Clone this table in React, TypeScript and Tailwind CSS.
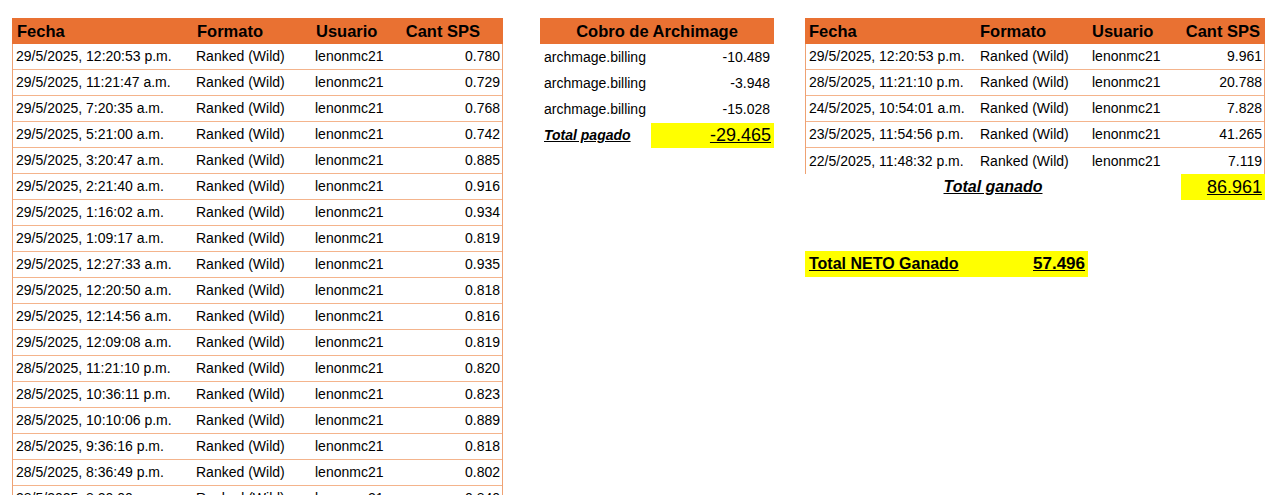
import React from "react";

const leftRows: [string, string][] = [
  ["29/5/2025, 12:20:53 p.m.", "0.780"],
  ["29/5/2025, 11:21:47 a.m.", "0.729"],
  ["29/5/2025, 7:20:35 a.m.", "0.768"],
  ["29/5/2025, 5:21:00 a.m.", "0.742"],
  ["29/5/2025, 3:20:47 a.m.", "0.885"],
  ["29/5/2025, 2:21:40 a.m.", "0.916"],
  ["29/5/2025, 1:16:02 a.m.", "0.934"],
  ["29/5/2025, 1:09:17 a.m.", "0.819"],
  ["29/5/2025, 12:27:33 a.m.", "0.935"],
  ["29/5/2025, 12:20:50 a.m.", "0.818"],
  ["29/5/2025, 12:14:56 a.m.", "0.816"],
  ["29/5/2025, 12:09:08 a.m.", "0.819"],
  ["28/5/2025, 11:21:10 p.m.", "0.820"],
  ["28/5/2025, 10:36:11 p.m.", "0.823"],
  ["28/5/2025, 10:10:06 p.m.", "0.889"],
  ["28/5/2025, 9:36:16 p.m.", "0.818"],
  ["28/5/2025, 8:36:49 p.m.", "0.802"],
  ["28/5/2025, 8:20:00 p.m.", "0.840"],
];

const rightRows: [string, string][] = [
  ["29/5/2025, 12:20:53 p.m.", "9.961"],
  ["28/5/2025, 11:21:10 p.m.", "20.788"],
  ["24/5/2025, 10:54:01 a.m.", "7.828"],
  ["23/5/2025, 11:54:56 p.m.", "41.265"],
  ["22/5/2025, 11:48:32 p.m.", "7.119"],
];

const billing = ["-10.489", "-3.948", "-15.028"];

const font = "font-['Liberation_Sans',Arial,sans-serif]";

export default function App() {
  return (
    <div className={`w-[1280px] h-[495px] overflow-hidden bg-white text-black ${font}`}>
      <div className="flex items-start pt-[18px] pl-[12px]">
        {/* Left table */}
        <div className="w-[491px] border-x border-[#EFA273]">
          <div className="grid grid-cols-[180px_119px_90px_1fr] h-[26px] items-center bg-[#E97132] text-[16.5px] font-bold -mx-px px-px">
            <div className="pl-[4px]">Fecha</div>
            <div className="pl-[4px]">Formato</div>
            <div className="pl-[4px]">Usuario</div>
            <div className="text-right pr-[22px]">Cant SPS</div>
          </div>
          {leftRows.map(([d, v], i) => (
            <div
              key={i}
              className="grid grid-cols-[180px_119px_90px_1fr] h-[26px] items-center text-[14px] border-b border-[#F4B48C]"
            >
              <div className="pl-[3px] whitespace-nowrap">{d}</div>
              <div className="pl-[3px]">Ranked (Wild)</div>
              <div className="pl-[3px]">lenonmc21</div>
              <div className="text-right pr-[2px]">{v}</div>
            </div>
          ))}
        </div>

        {/* Middle table */}
        <div className="w-[234px] ml-[37px]">
          <div className="h-[26px] flex items-center justify-center bg-[#E97132] text-[16.5px] font-bold">
            Cobro de Archimage
          </div>
          {billing.map((v, i) => (
            <div key={i} className="h-[26px] flex items-center justify-between text-[14px] pl-[4px] pr-[4px]">
              <span>archmage.billing</span>
              <span>{v}</span>
            </div>
          ))}
          <div className="h-[26px] flex items-center">
            <div className="w-[111px] pl-[4px] text-[14px] font-bold italic underline">Total pagado</div>
            <div className="flex-1 h-[25px] bg-[#FFFF00] flex items-center justify-end pr-[3px] text-[18px] underline">
              -29.465
            </div>
          </div>
        </div>

        {/* Right table */}
        <div className="w-[460px] ml-[31px]">
          <div className="border-x border-[#EFA273]">
            <div className="grid grid-cols-[171px_112px_93px_1fr] h-[26px] items-center bg-[#E97132] text-[16.5px] font-bold -mx-px px-px">
              <div className="pl-[3px]">Fecha</div>
              <div className="pl-[3px]">Formato</div>
              <div className="pl-[3px]">Usuario</div>
              <div className="text-right pr-[4px]">Cant SPS</div>
            </div>
            {rightRows.map(([d, v], i) => (
              <div
                key={i}
                className={`grid grid-cols-[171px_112px_93px_1fr] h-[26px] items-center text-[14px] ${
                  i < rightRows.length - 1 ? "border-b border-[#F4B48C]" : ""
                }`}
              >
                <div className="pl-[3px] whitespace-nowrap">{d}</div>
                <div className="pl-[3px]">Ranked (Wild)</div>
                <div className="pl-[3px]">lenonmc21</div>
                <div className="text-right pr-[2px]">{v}</div>
              </div>
            ))}
          </div>
          <div className="grid grid-cols-[376px_1fr] h-[26px] items-center">
            <div className="text-center text-[16px] font-bold italic underline">Total ganado</div>
            <div className="h-[26px] bg-[#FFFF00] flex items-center justify-end pr-[3px] text-[18px] underline">
              86.961
            </div>
          </div>
          <div className="mt-[51px] w-[283px] h-[26px] bg-[#FFFF00] flex items-center justify-between pl-[4px] pr-[3px] font-bold underline">
            <span className="text-[16px]">Total NETO Ganado</span>
            <span className="text-[17px]">57.496</span>
          </div>
        </div>
      </div>
    </div>
  );
}
